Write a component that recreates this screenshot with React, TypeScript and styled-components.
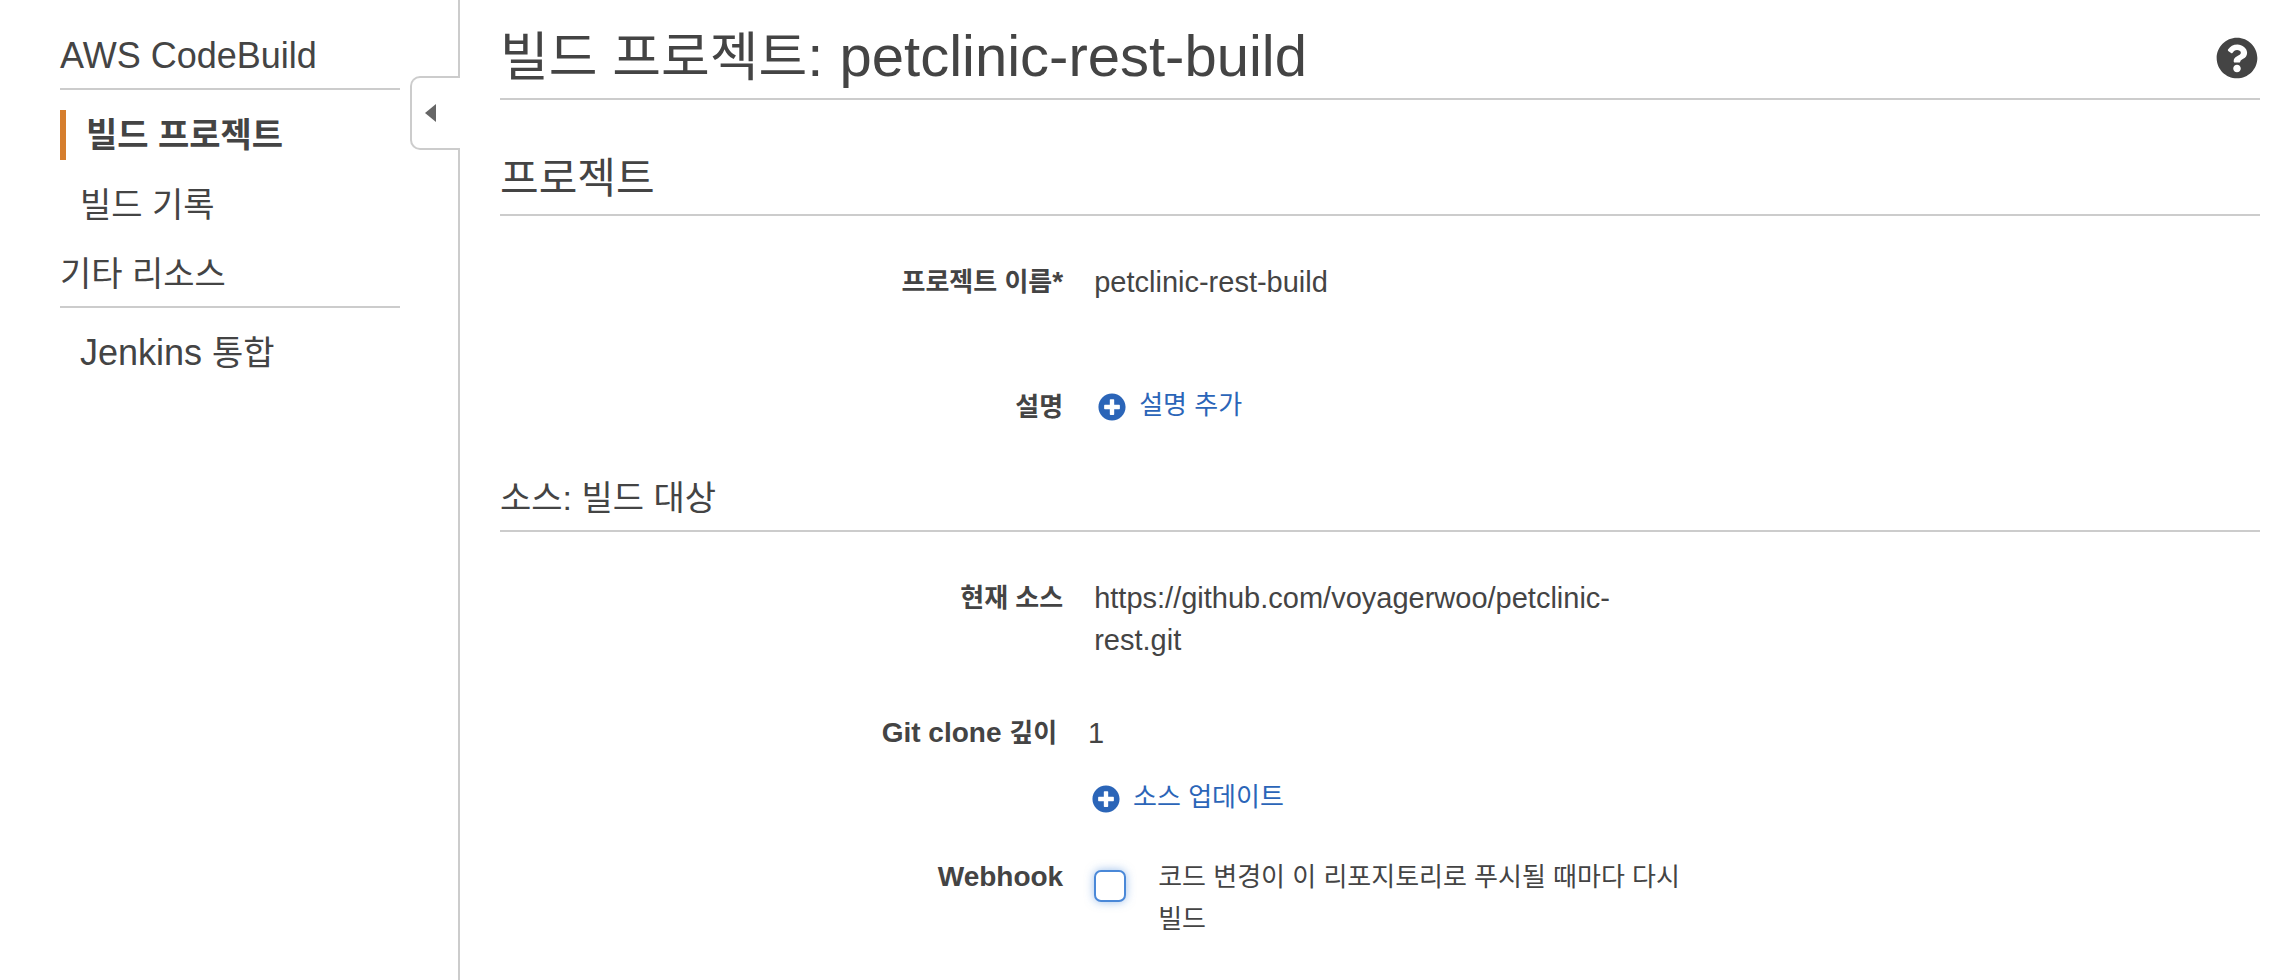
import React from "react";
import styled, { createGlobalStyle } from "styled-components";
import { FaPlusCircle, FaQuestionCircle } from "react-icons/fa";

const INK = "#444444";
const LINE = "#cccccc";
const LINK = "#2b65b8";

const GlobalStyle = createGlobalStyle`
  * { box-sizing: border-box; }
  body {
    margin: 0;
    background: #ffffff;
    color: ${INK};
    font-family: "Liberation Sans", "Noto Sans CJK KR", sans-serif;
    font-size: 29px;
    line-height: 42px;
    word-break: keep-all;
  }
`;

const Page = styled.div`
  display: flex;
  min-height: 100vh;
`;

const Sidebar = styled.nav`
  position: relative;
  flex: 0 0 460px;
  padding: 34px 58px 0 60px;
  border-right: 2px solid ${LINE};
`;

const SidebarHeading = styled.h2<{ $korean?: boolean }>`
  margin: 0 0 20px;
  padding-bottom: 10px;
  border-bottom: 2px solid ${LINE};
  font-size: ${(p) => (p.$korean ? 34 : 36)}px;
  line-height: 44px;
  font-weight: 400;
`;

const NavList = styled.ul`
  display: flex;
  flex-direction: column;
  gap: 20px;
  margin: 0 0 22px;
  padding: 0;
  list-style: none;
`;

const NavLink = styled.a<{ $active?: boolean }>`
  display: block;
  padding-left: 20px;
  border-left: ${(p) => (p.$active ? `6px solid #d57e2e` : "0")};
  color: inherit;
  font-size: 36px;
  line-height: 50px;
  font-weight: ${(p) => (p.$active ? 700 : 400)};
  text-decoration: none;
`;

/* Hangul is set slightly smaller than the Latin text beside it. */
const Hangul = styled.span<{ $size: number }>`
  font-size: ${(p) => p.$size}px;
  line-height: 1;
`;

const CollapseTab = styled.button`
  position: absolute;
  top: 76px;
  right: -2px;
  display: flex;
  align-items: center;
  width: 50px;
  height: 74px;
  padding: 0 0 0 13px;
  border: 2px solid ${LINE};
  border-right: 0;
  border-radius: 10px 0 0 10px;
  background: #ffffff;
  cursor: pointer;
`;

const Main = styled.main`
  flex: 1;
  min-width: 0;
  padding: 22px 14px 40px 40px;
`;

const TitleBar = styled.header`
  display: flex;
  justify-content: space-between;
  align-items: center;
  padding-bottom: 8px;
  border-bottom: 2px solid ${LINE};
`;

const Title = styled.h1`
  margin: 0;
  font-size: 58px;
  line-height: 68px;
  font-weight: 400;
`;

const HelpButton = styled.button`
  display: flex;
  margin: 0;
  padding: 4px 2px 0;
  border: 0;
  background: none;
  color: ${INK};
  font-size: 42px;
  cursor: pointer;
`;

const SectionHeading = styled.h2`
  margin: 54px 0 45px;
  padding-bottom: 10px;
  border-bottom: 2px solid ${LINE};
  font-size: 42px;
  line-height: 50px;
  font-weight: 400;
`;

const SubHeading = styled.h3`
  margin: 48px 0 45px;
  padding-bottom: 10px;
  border-bottom: 2px solid ${LINE};
  font-size: 34px;
  line-height: 44px;
  font-weight: 400;
`;

const Field = styled.div<{ $before?: number; $nested?: boolean }>`
  display: grid;
  grid-template-columns: 32% 34%;
  column-gap: 31px;
  margin-top: ${(p) => p.$before ?? 0}px;
  margin-left: ${(p) => (p.$nested ? -9 : 0)}px;
`;

const FieldName = styled.label`
  font-size: 28px;
  font-weight: 700;
  text-align: right;
`;

const FieldValue = styled.div`
  grid-column: 2;
`;

const ActionButton = styled.button`
  display: flex;
  align-items: center;
  gap: 13px;
  height: 42px;
  padding: 0 0 0 4px;
  border: 0;
  background: none;
  color: ${LINK};
  font: inherit;
  font-size: 26px;
  cursor: pointer;

  svg { font-size: 28px; }
`;

const ActionText = styled.span`
  padding-bottom: 4px;
`;

const CheckField = styled.div`
  grid-column: 2;
  display: flex;
  gap: 32px;
`;

const CheckBox = styled.input`
  flex: none;
  appearance: none;
  width: 32px;
  height: 32px;
  margin: 14px 0 0;
  border: 2px solid #4a88d8;
  border-radius: 7px;
  background: #ffffff;
  box-shadow: 0 0 10px rgba(74, 136, 216, 0.55);
`;

const CheckLabel = styled.label`
  font-size: 26px;
`;

export default function App() {
  return (
    <>
      <GlobalStyle />
      <Page>
        <Sidebar>
          <SidebarHeading>AWS CodeBuild</SidebarHeading>
          <NavList>
            <li>
              <NavLink href="#projects" $active>
                <Hangul $size={34}>빌드 프로젝트</Hangul>
              </NavLink>
            </li>
            <li>
              <NavLink href="#history">
                <Hangul $size={34}>빌드 기록</Hangul>
              </NavLink>
            </li>
          </NavList>
          <SidebarHeading $korean>기타 리소스</SidebarHeading>
          <NavList>
            <li>
              <NavLink href="#jenkins">
                Jenkins <Hangul $size={34}>통합</Hangul>
              </NavLink>
            </li>
          </NavList>
          <CollapseTab type="button" aria-label="메뉴 접기">
            <svg width="11" height="18" viewBox="0 0 11 18" aria-hidden="true">
              <path d="M11 0v18L0 9z" fill="#666666" />
            </svg>
          </CollapseTab>
        </Sidebar>

        <Main>
          <TitleBar>
            <Title>
              <Hangul $size={53}>빌드 프로젝트</Hangul>: petclinic-rest-build
            </Title>
            <HelpButton type="button" aria-label="도움말">
              <FaQuestionCircle />
            </HelpButton>
          </TitleBar>

          <SectionHeading>프로젝트</SectionHeading>
          <Field>
            <FieldName as="div">
              <Hangul $size={26}>프로젝트 이름</Hangul>*
            </FieldName>
            <FieldValue>petclinic-rest-build</FieldValue>
          </Field>
          <Field $before={83}>
            <FieldName as="div">
              <Hangul $size={26}>설명</Hangul>
            </FieldName>
            <FieldValue>
              <ActionButton type="button">
                <FaPlusCircle />
                <ActionText>설명 추가</ActionText>
              </ActionButton>
            </FieldValue>
          </Field>

          <SubHeading>소스: 빌드 대상</SubHeading>
          <Field>
            <FieldName as="div">
              <Hangul $size={26}>현재 소스</Hangul>
            </FieldName>
            <FieldValue>https://github.com/voyagerwoo/petclinic-rest.git</FieldValue>
          </Field>
          <Field $before={51} $nested>
            <FieldName as="div">
              Git clone <Hangul $size={26}>깊이</Hangul>
            </FieldName>
            <FieldValue>1</FieldValue>
          </Field>
          <Field $before={24} $nested>
            <FieldValue>
              <ActionButton type="button">
                <FaPlusCircle />
                <ActionText>소스 업데이트</ActionText>
              </ActionButton>
            </FieldValue>
          </Field>
          <Field $before={36}>
            <FieldName htmlFor="webhook">Webhook</FieldName>
            <CheckField>
              <CheckBox type="checkbox" id="webhook" />
              <CheckLabel htmlFor="webhook">
                코드 변경이 이 리포지토리로 푸시될 때마다 다시 빌드
              </CheckLabel>
            </CheckField>
          </Field>
        </Main>
      </Page>
    </>
  );
}
